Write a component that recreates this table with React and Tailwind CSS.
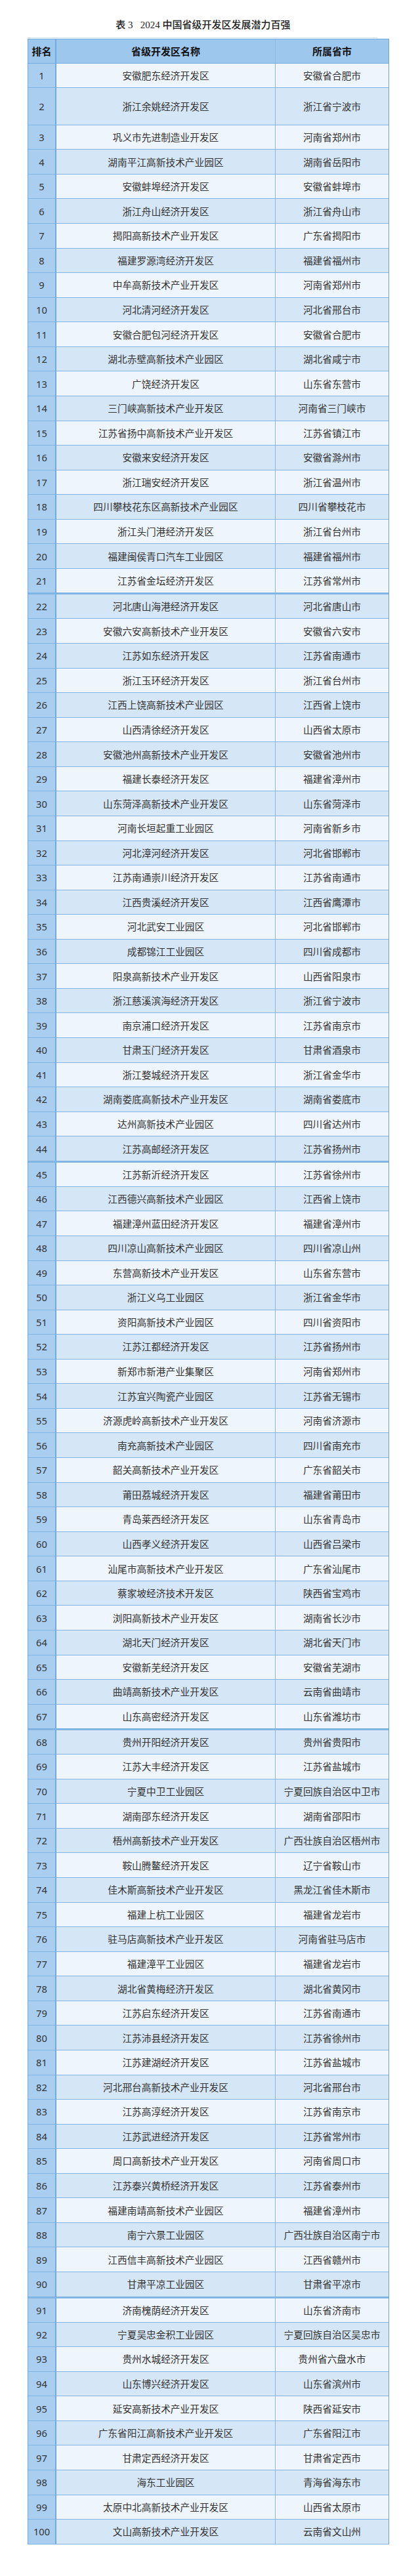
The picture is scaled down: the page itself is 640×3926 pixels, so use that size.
import React from "react";

// 2024 中国省级开发区发展潜力百强 — ranking table
const rows = [
  ["安徽肥东经济开发区", "安徽省合肥市"],
  ["浙江余姚经济开发区", "浙江省宁波市"],
  ["巩义市先进制造业开发区", "河南省郑州市"],
  ["湖南平江高新技术产业园区", "湖南省岳阳市"],
  ["安徽蚌埠经济开发区", "安徽省蚌埠市"],
  ["浙江舟山经济开发区", "浙江省舟山市"],
  ["揭阳高新技术产业开发区", "广东省揭阳市"],
  ["福建罗源湾经济开发区", "福建省福州市"],
  ["中牟高新技术产业开发区", "河南省郑州市"],
  ["河北清河经济开发区", "河北省邢台市"],
  ["安徽合肥包河经济开发区", "安徽省合肥市"],
  ["湖北赤壁高新技术产业园区", "湖北省咸宁市"],
  ["广饶经济开发区", "山东省东营市"],
  ["三门峡高新技术产业开发区", "河南省三门峡市"],
  ["江苏省扬中高新技术产业开发区", "江苏省镇江市"],
  ["安徽来安经济开发区", "安徽省滁州市"],
  ["浙江瑞安经济开发区", "浙江省温州市"],
  ["四川攀枝花东区高新技术产业园区", "四川省攀枝花市"],
  ["浙江头门港经济开发区", "浙江省台州市"],
  ["福建闽侯青口汽车工业园区", "福建省福州市"],
  ["江苏省金坛经济开发区", "江苏省常州市"],
  ["河北唐山海港经济开发区", "河北省唐山市"],
  ["安徽六安高新技术产业开发区", "安徽省六安市"],
  ["江苏如东经济开发区", "江苏省南通市"],
  ["浙江玉环经济开发区", "浙江省台州市"],
  ["江西上饶高新技术产业园区", "江西省上饶市"],
  ["山西清徐经济开发区", "山西省太原市"],
  ["安徽池州高新技术产业开发区", "安徽省池州市"],
  ["福建长泰经济开发区", "福建省漳州市"],
  ["山东菏泽高新技术产业开发区", "山东省菏泽市"],
  ["河南长垣起重工业园区", "河南省新乡市"],
  ["河北漳河经济开发区", "河北省邯郸市"],
  ["江苏南通崇川经济开发区", "江苏省南通市"],
  ["江西贵溪经济开发区", "江西省鹰潭市"],
  ["河北武安工业园区", "河北省邯郸市"],
  ["成都锦江工业园区", "四川省成都市"],
  ["阳泉高新技术产业开发区", "山西省阳泉市"],
  ["浙江慈溪滨海经济开发区", "浙江省宁波市"],
  ["南京浦口经济开发区", "江苏省南京市"],
  ["甘肃玉门经济开发区", "甘肃省酒泉市"],
  ["浙江婺城经济开发区", "浙江省金华市"],
  ["湖南娄底高新技术产业开发区", "湖南省娄底市"],
  ["达州高新技术产业园区", "四川省达州市"],
  ["江苏高邮经济开发区", "江苏省扬州市"],
  ["江苏新沂经济开发区", "江苏省徐州市"],
  ["江西德兴高新技术产业园区", "江西省上饶市"],
  ["福建漳州蓝田经济开发区", "福建省漳州市"],
  ["四川凉山高新技术产业园区", "四川省凉山州"],
  ["东营高新技术产业开发区", "山东省东营市"],
  ["浙江义乌工业园区", "浙江省金华市"],
  ["资阳高新技术产业园区", "四川省资阳市"],
  ["江苏江都经济开发区", "江苏省扬州市"],
  ["新郑市新港产业集聚区", "河南省郑州市"],
  ["江苏宜兴陶瓷产业园区", "江苏省无锡市"],
  ["济源虎岭高新技术产业开发区", "河南省济源市"],
  ["南充高新技术产业园区", "四川省南充市"],
  ["韶关高新技术产业开发区", "广东省韶关市"],
  ["莆田荔城经济开发区", "福建省莆田市"],
  ["青岛莱西经济开发区", "山东省青岛市"],
  ["山西孝义经济开发区", "山西省吕梁市"],
  ["汕尾市高新技术产业开发区", "广东省汕尾市"],
  ["蔡家坡经济技术开发区", "陕西省宝鸡市"],
  ["浏阳高新技术产业开发区", "湖南省长沙市"],
  ["湖北天门经济开发区", "湖北省天门市"],
  ["安徽新芜经济开发区", "安徽省芜湖市"],
  ["曲靖高新技术产业开发区", "云南省曲靖市"],
  ["山东高密经济开发区", "山东省潍坊市"],
  ["贵州开阳经济开发区", "贵州省贵阳市"],
  ["江苏大丰经济开发区", "江苏省盐城市"],
  ["宁夏中卫工业园区", "宁夏回族自治区中卫市"],
  ["湖南邵东经济开发区", "湖南省邵阳市"],
  ["梧州高新技术产业开发区", "广西壮族自治区梧州市"],
  ["鞍山腾鳌经济开发区", "辽宁省鞍山市"],
  ["佳木斯高新技术产业开发区", "黑龙江省佳木斯市"],
  ["福建上杭工业园区", "福建省龙岩市"],
  ["驻马店高新技术产业开发区", "河南省驻马店市"],
  ["福建漳平工业园区", "福建省龙岩市"],
  ["湖北省黄梅经济开发区", "湖北省黄冈市"],
  ["江苏启东经济开发区", "江苏省南通市"],
  ["江苏沛县经济开发区", "江苏省徐州市"],
  ["江苏建湖经济开发区", "江苏省盐城市"],
  ["河北邢台高新技术产业开发区", "河北省邢台市"],
  ["江苏高淳经济开发区", "江苏省南京市"],
  ["江苏武进经济开发区", "江苏省常州市"],
  ["周口高新技术产业开发区", "河南省周口市"],
  ["江苏泰兴黄桥经济开发区", "江苏省泰州市"],
  ["福建南靖高新技术产业园区", "福建省漳州市"],
  ["南宁六景工业园区", "广西壮族自治区南宁市"],
  ["江西信丰高新技术产业园区", "江西省赣州市"],
  ["甘肃平凉工业园区", "甘肃省平凉市"],
  ["济南槐荫经济开发区", "山东省济南市"],
  ["宁夏吴忠金积工业园区", "宁夏回族自治区吴忠市"],
  ["贵州水城经济开发区", "贵州省六盘水市"],
  ["山东博兴经济开发区", "山东省滨州市"],
  ["延安高新技术产业开发区", "陕西省延安市"],
  ["广东省阳江高新技术产业开发区", "广东省阳江市"],
  ["甘肃定西经济开发区", "甘肃省定西市"],
  ["海东工业园区", "青海省海东市"],
  ["太原中北高新技术产业开发区", "山西省太原市"],
  ["文山高新技术产业开发区", "云南省文山州"],
];

// rows that start a new page in the source document get a heavier rule
const pageBreaks = [22, 45, 68, 91];

function Row({ rank, name, place }) {
  const even = rank % 2 === 0;
  const brk = pageBreaks.includes(rank);
  const height = rank === 2 ? "h-[56.7px]" : brk ? "h-[39px]" : "h-[37.57px]";
  const bg = even ? "bg-[#d5e6f6]" : "bg-[#eef5fc]";
  return (
    <div className={`flex ${height} border-b border-[#80b4e2] ${brk ? "border-t-2 border-t-[#80b4e2]" : ""}`}>
      <div className="w-[43px] shrink-0 flex items-center justify-center bg-[#a9cef0] border-r-2 border-[#73a9dc] font-['Noto_Sans','Noto_Sans_CJK_SC',sans-serif] text-[14.7px] text-[#333]">
        {rank}
      </div>
      <div className={`w-[334px] shrink-0 flex items-center justify-center ${bg} border-r border-[#88b9e4] text-[14.7px] text-[#333]`}>
        {name}
      </div>
      <div className={`flex-1 flex items-center justify-center ${bg} text-[14.7px] text-[#333]`}>
        {place}
      </div>
    </div>
  );
}

export default function App() {
  return (
    <div className="min-h-[3926px] bg-white font-['Noto_Sans_CJK_SC','Noto_Sans',sans-serif]">
      <div className="ml-[42px] w-[551px]">
        <div className="pt-[28px] pr-4 text-center text-[15px] leading-[20px] font-medium text-[#222] font-['Liberation_Serif','Noto_Sans_CJK_SC',serif]">
          表 3&nbsp;&nbsp;&nbsp;2024 中国省级开发区发展潜力百强
        </div>
        <div className="mt-[9px] w-[533px] h-px bg-[#cfdce9]" />
        <div className="mt-[1px] border-l border-r border-[#6fa6da]">
          <div className="flex h-[37.5px] bg-[#9dc7ed] border-t border-b border-[#75aadc] text-[15px] font-bold text-[#111]">
            <div className="w-[43px] shrink-0 flex items-center justify-center border-r-2 border-[#73a9dc]">排名</div>
            <div className="w-[334px] shrink-0 flex items-center justify-center border-r border-[#88b9e4]">省级开发区名称</div>
            <div className="flex-1 flex items-center justify-center">所属省市</div>
          </div>
          {rows.map(([name, place], i) => (
            <Row key={i} rank={i + 1} name={name} place={place} />
          ))}
        </div>
      </div>
    </div>
  );
}
